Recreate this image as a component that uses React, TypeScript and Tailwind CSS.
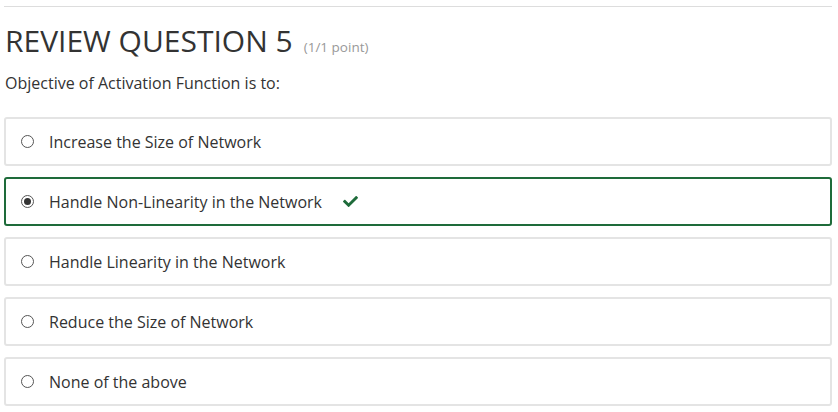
import { FaCheck } from "react-icons/fa";

const OPTIONS = [
  { label: "Increase the Size of Network", selected: false },
  { label: "Handle Non-Linearity in the Network", selected: true },
  { label: "Handle Linearity in the Network", selected: false },
  { label: "Reduce the Size of Network", selected: false },
  { label: "None of the above", selected: false },
];

function Radio({ checked }: { checked: boolean }) {
  return (
    <span className="flex size-[13px] shrink-0 items-center justify-center rounded-full border border-[#555] bg-white">
      {checked && <span className="size-[7px] rounded-full bg-[#333]" />}
    </span>
  );
}

export default function App() {
  return (
    <div className="min-h-screen bg-white px-1 pt-[6px] font-['Open_Sans',sans-serif] text-[#333]">
      <div className="w-[828px] border-t border-[#ddd]" />
      <h2 className="mt-[15px] flex items-baseline gap-[11px] pl-px text-[30px] leading-[38px] font-normal text-[#333]">
        REVIEW QUESTION 5
        <span className="text-[13.5px] leading-none text-[#999]">(1/1 point)</span>
      </h2>
      <p className="mt-[12px] pl-px text-[16px] leading-[22px]">Objective of Activation Function is to:</p>
      <div className="mt-[23px] flex w-[828px] flex-col gap-[11px]">
        {OPTIONS.map((o) => (
          <label
            key={o.label}
            className={
              o.selected
                ? "flex h-[49px] items-center rounded-[3px] border-2 border-[#1e6b3a] pl-[15px] text-[16px]"
                : "flex h-[49px] items-center rounded-[3px] border-2 border-[#e4e4e4] pl-[15px] text-[16px]"
            }
          >
            <Radio checked={o.selected} />
            <span className="ml-[15px]">{o.label}</span>
            {o.selected && <FaCheck className="ml-[21px] text-[#1e6b3a]" size={15} />}
          </label>
        ))}
      </div>
    </div>
  );
}
